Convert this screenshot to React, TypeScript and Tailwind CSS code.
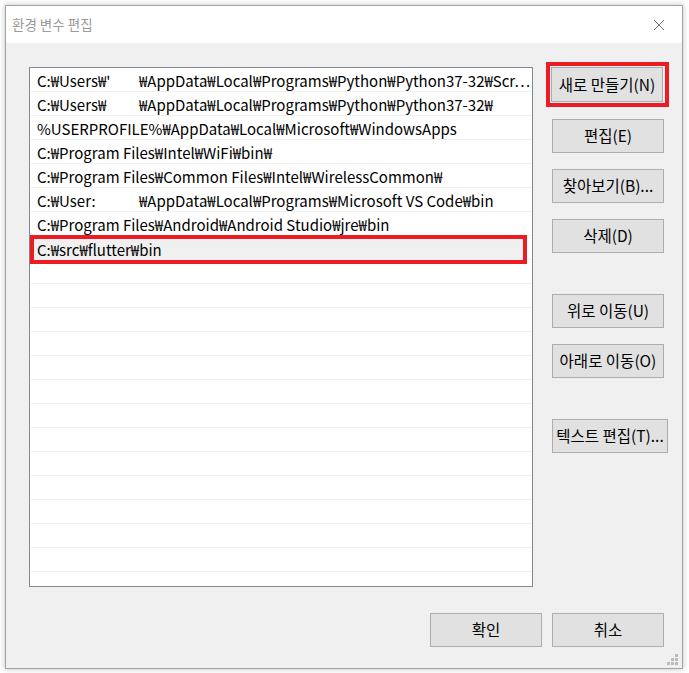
import { FC } from "react";

const FONT = { fontFamily: '"Noto Sans CJK KR", "Noto Sans", sans-serif' };

type Row = { pre?: string; text: string };

const rows: Row[] = [
  { pre: "C:₩Users₩'", text: "₩AppData₩Local₩Programs₩Python₩Python37-32₩Scr…" },
  { pre: "C:₩Users₩", text: "₩AppData₩Local₩Programs₩Python₩Python37-32₩" },
  { text: "%USERPROFILE%₩AppData₩Local₩Microsoft₩WindowsApps" },
  { text: "C:₩Program Files₩Intel₩WiFi₩bin₩" },
  { text: "C:₩Program Files₩Common Files₩Intel₩WirelessCommon₩" },
  { pre: "C:₩User:", text: "₩AppData₩Local₩Programs₩Microsoft VS Code₩bin" },
  { text: "C:₩Program Files₩Android₩Android Studio₩jre₩bin" },
];

const Btn: FC<{ label: string; wide?: boolean; className?: string }> = ({
  label,
  wide,
  className = "",
}) => (
  <button
    className={`h-[34px] ${wide ? "w-[116px]" : "w-[112px]"} border border-[#adadad] bg-[#e1e1e1] text-[15.5px] text-black leading-none whitespace-nowrap ${className}`}
  >
    {label}
  </button>
);

export default function App() {
  const empty = Array.from({ length: 14 });
  return (
    <div className="w-[689px] h-[673px] bg-white pt-[5px] pl-[5px]" style={FONT}>
      <div className="w-[678px] h-[664px] border border-[#a3a3a3] bg-[#f0f0f0] shadow-[0_0_6px_rgba(0,0,0,0.25)] flex flex-col">
        {/* title bar */}
        <div className="h-[37px] bg-white flex items-center justify-between pl-[6px] pr-[17px] shrink-0">
          <span className="text-[13.5px] text-[#9a9a9a]">환경 변수 편집</span>
          <svg width="12" height="12" viewBox="0 0 12 12">
            <path d="M1 1L11 11M11 1L1 11" stroke="#7a7a7a" strokeWidth="1" />
          </svg>
        </div>

        <div className="flex-1 relative flex pl-[23px] pt-[24px]">
          {/* list box */}
          <div className="w-[504px] h-[520px] border border-[#828790] bg-white overflow-hidden">
            {rows.map((r, i) => (
              <div
                key={i}
                className="h-[24px] mx-[1px] border-b border-[#f0f0f0] flex items-center pt-[3px] pl-[6px] text-[15px] text-black whitespace-nowrap"
              >
                {r.pre && (
                  <span className="inline-block w-[102px] overflow-hidden">{r.pre}</span>
                )}
                <span>{r.text}</span>
              </div>
            ))}
            <div className="h-[24px] mx-[1px] border-b border-[#f0f0f0] relative">
              <div className="absolute -left-[1px] -top-[1px] w-[497px] h-[29px] border-[4px] border-[#ed1c24] bg-[#f0f0f0] flex items-center pt-[2px] pl-[3px] text-[15px] text-black">
                C:₩src₩flutter₩bin
              </div>
            </div>
            {empty.map((_, i) => (
              <div key={i} className="h-[24px] mx-[1px] border-b border-[#f0f0f0]" />
            ))}
          </div>

          {/* right buttons */}
          <div className="ml-[19px] flex flex-col">
            <div className="-ml-[6px] -mt-[5px] w-[123px] h-[45px] border-[4px] border-[#ed1c24] p-[1px]">
              <Btn label="새로 만들기(N)" className="w-[111px] h-[35px]" />
            </div>
            <Btn label="편집(E)" className="mt-[12px]" />
            <Btn label="찾아보기(B)..." className="mt-[16px]" />
            <Btn label="삭제(D)" className="mt-[16px]" />
            <Btn label="위로 이동(U)" className="mt-[41px]" />
            <Btn label="아래로 이동(O)" className="mt-[16px]" />
            <Btn label="텍스트 편집(T)..." wide className="mt-[41px]" />
          </div>

          {/* bottom buttons */}
          <div className="absolute left-[424px] top-[570px] flex gap-[10px]">
            <Btn label="확인" />
            <Btn label="취소" />
          </div>

          {/* resize grip */}
          <svg className="absolute right-[3px] bottom-[2px]" width="12" height="12" viewBox="0 0 12 12">
            <g fill="#bcbcbc">
              <rect x="8" y="0" width="3" height="3" />
              <rect x="4" y="4" width="3" height="3" />
              <rect x="8" y="4" width="3" height="3" />
              <rect x="0" y="8" width="3" height="3" />
              <rect x="4" y="8" width="3" height="3" />
              <rect x="8" y="8" width="3" height="3" />
            </g>
          </svg>
        </div>
      </div>
    </div>
  );
}
